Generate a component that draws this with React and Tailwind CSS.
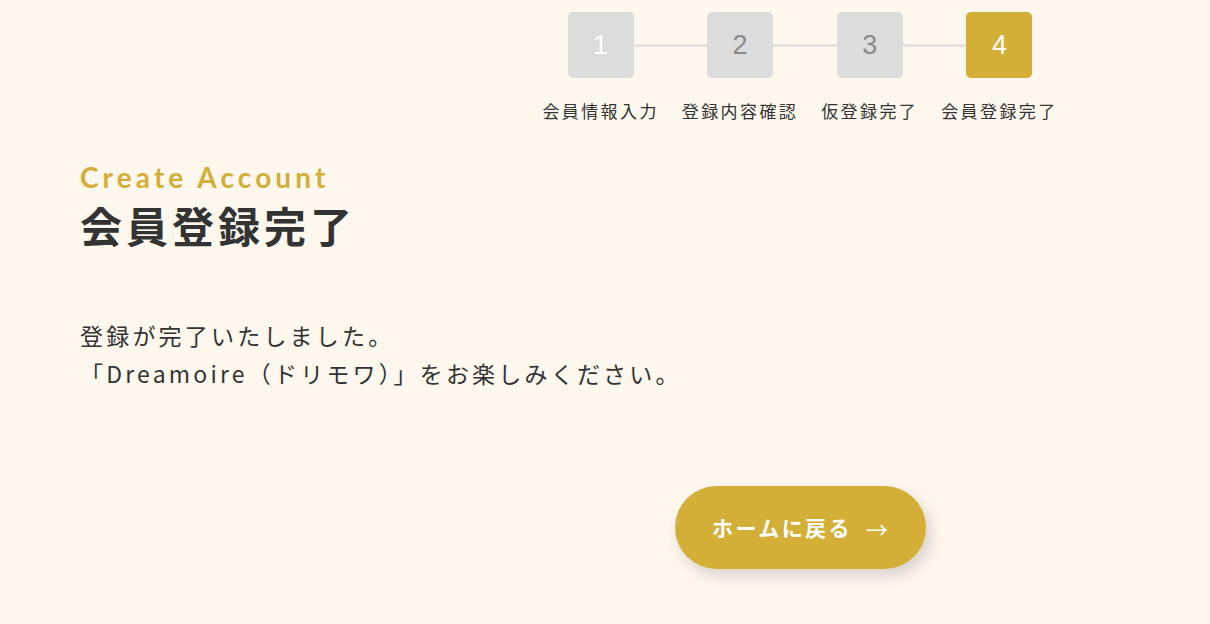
import React from "react";

const steps = [
  { num: "1", label: "会員情報入力", state: "done" },
  { num: "2", label: "登録内容確認", state: "todo" },
  { num: "3", label: "仮登録完了", state: "todo" },
  { num: "4", label: "会員登録完了", state: "current" },
];

const jp = { fontFamily: '"Noto Sans CJK JP", "Noto Sans", sans-serif' };

const StepBar = () => {
  return (
    <div className="relative flex gap-[23px]">
      {/* connector behind the boxes */}
      <div className="absolute left-[59px] right-[58px] top-[32px] h-[3px] bg-[#e4e2de]" />
      {steps.map((step) => (
        <div key={step.num} className="relative flex flex-col items-center">
          <div
            className={
              step.state === "current"
                ? "w-[66px] h-[66px] rounded-[5px] bg-[#d4af37] flex items-center justify-center text-white text-[27px]"
                : step.state === "done"
                ? "w-[66px] h-[66px] rounded-[5px] bg-[#dcdcdc] flex items-center justify-center text-white text-[27px]"
                : "w-[66px] h-[66px] rounded-[5px] bg-[#dcdcdc] flex items-center justify-center text-[#8a8a8a] text-[27px]"
            }
            style={{ fontFamily: '"Liberation Sans", Arial, sans-serif' }}
          >
            {step.num}
          </div>
          <p
            className="mt-[21px] text-[17px] leading-[24px] tracking-[2.4px] text-[#333]"
            style={jp}
          >
            {step.label}
          </p>
        </div>
      ))}
    </div>
  );
};

const App = () => {
  return (
    <div className="min-h-screen w-full bg-[#fdf7ee] pb-10">
      <div className="flex justify-center pl-[390px] pt-[12px]">
        <StepBar />
      </div>

      <div className="px-[80px]">
        <p
          className="mt-[37px] text-[28px] leading-[34px] font-bold tracking-[4.1px] text-[#d4af37]"
          style={{ fontFamily: 'Lato, "Noto Sans", sans-serif' }}
        >
          Create Account
        </p>
        <h1
          className="mt-[3px] text-[42px] leading-[55px] font-bold tracking-[4px] text-[#333]"
          style={jp}
        >
          会員登録完了
        </h1>

        <div
          className="mt-[64px] text-[23px] leading-[38px] tracking-[3.2px] text-[#333]"
          style={jp}
        >
          <p>登録が完了いたしました。</p>
          <p>「Dreamoire（ドリモワ）」をお楽しみください。</p>
        </div>
      </div>

      <div className="flex justify-center pl-[390px] mt-[94px]">
        <button
          type="button"
          className="w-[251px] h-[83px] rounded-full bg-[#d4af37] text-white shadow-[5px_7px_14px_rgba(60,40,60,0.18)] flex items-center justify-center gap-[14px]"
          style={jp}
        >
          <span className="text-[21px] font-bold tracking-[2.4px]">ホームに戻る</span>
          <span className="text-[22px] leading-none">→</span>
        </button>
      </div>
    </div>
  );
};

export default App;
